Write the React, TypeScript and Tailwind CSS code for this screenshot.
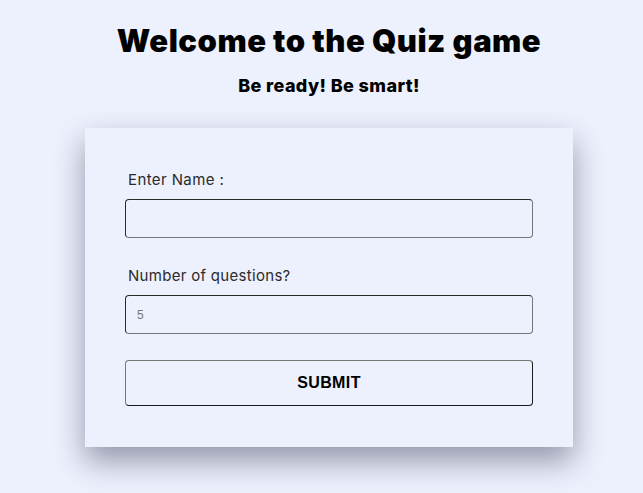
export default function App() {
  return (
    <div className="min-h-[493px] w-full bg-[#edf0fd] flex flex-col items-center pl-[15px] font-['Inter',sans-serif]">
      <h1 className="mt-[24px] text-[31px] leading-[34px] font-black text-black tracking-[0.5px]">
        Welcome to the Quiz game
      </h1>
      <h2 className="mt-[18px] text-[18px] leading-[20px] font-extrabold text-black tracking-[0.4px]">
        Be ready! Be smart!
      </h2>
      <div className="mt-[32px] w-[488px] h-[319px] bg-[#edf0fd] shadow-[0_14px_28px_rgba(40,44,70,0.45)] px-[40px] pt-[43px]">
        <label className="block pl-[3px] text-[15px] leading-[18px] text-[#2b2b2b] tracking-[0.4px]">Enter Name :</label>
        <input
          type="text"
          className="mt-[10px] block w-full h-[39px] rounded-[4px] border border-t-[#2a2a2a] border-l-[#2a2a2a] border-b-[#767676] border-r-[#767676] bg-transparent px-[12px] outline-none"
        />
        <label className="block mt-[29px] pl-[3px] text-[15px] leading-[18px] text-[#2b2b2b] tracking-[0.3px]">Number of questions?</label>
        <input
          type="number"
          placeholder="5"
          className="mt-[10px] block w-full h-[39px] rounded-[4px] border border-t-[#2a2a2a] border-l-[#2a2a2a] border-b-[#767676] border-r-[#767676] bg-transparent px-[11px] text-[12px] font-['Liberation_Sans',sans-serif] placeholder:text-[#777] outline-none"
        />
        <button className="mt-[26px] block w-full h-[46px] rounded-[4px] border border-t-[#767676] border-l-[#767676] border-b-[#1a1a1a] border-r-[#1a1a1a] bg-transparent text-[16px] font-bold text-black font-['Liberation_Sans',sans-serif] tracking-[0.4px]">
          SUBMIT
        </button>
      </div>
    </div>
  );
}
